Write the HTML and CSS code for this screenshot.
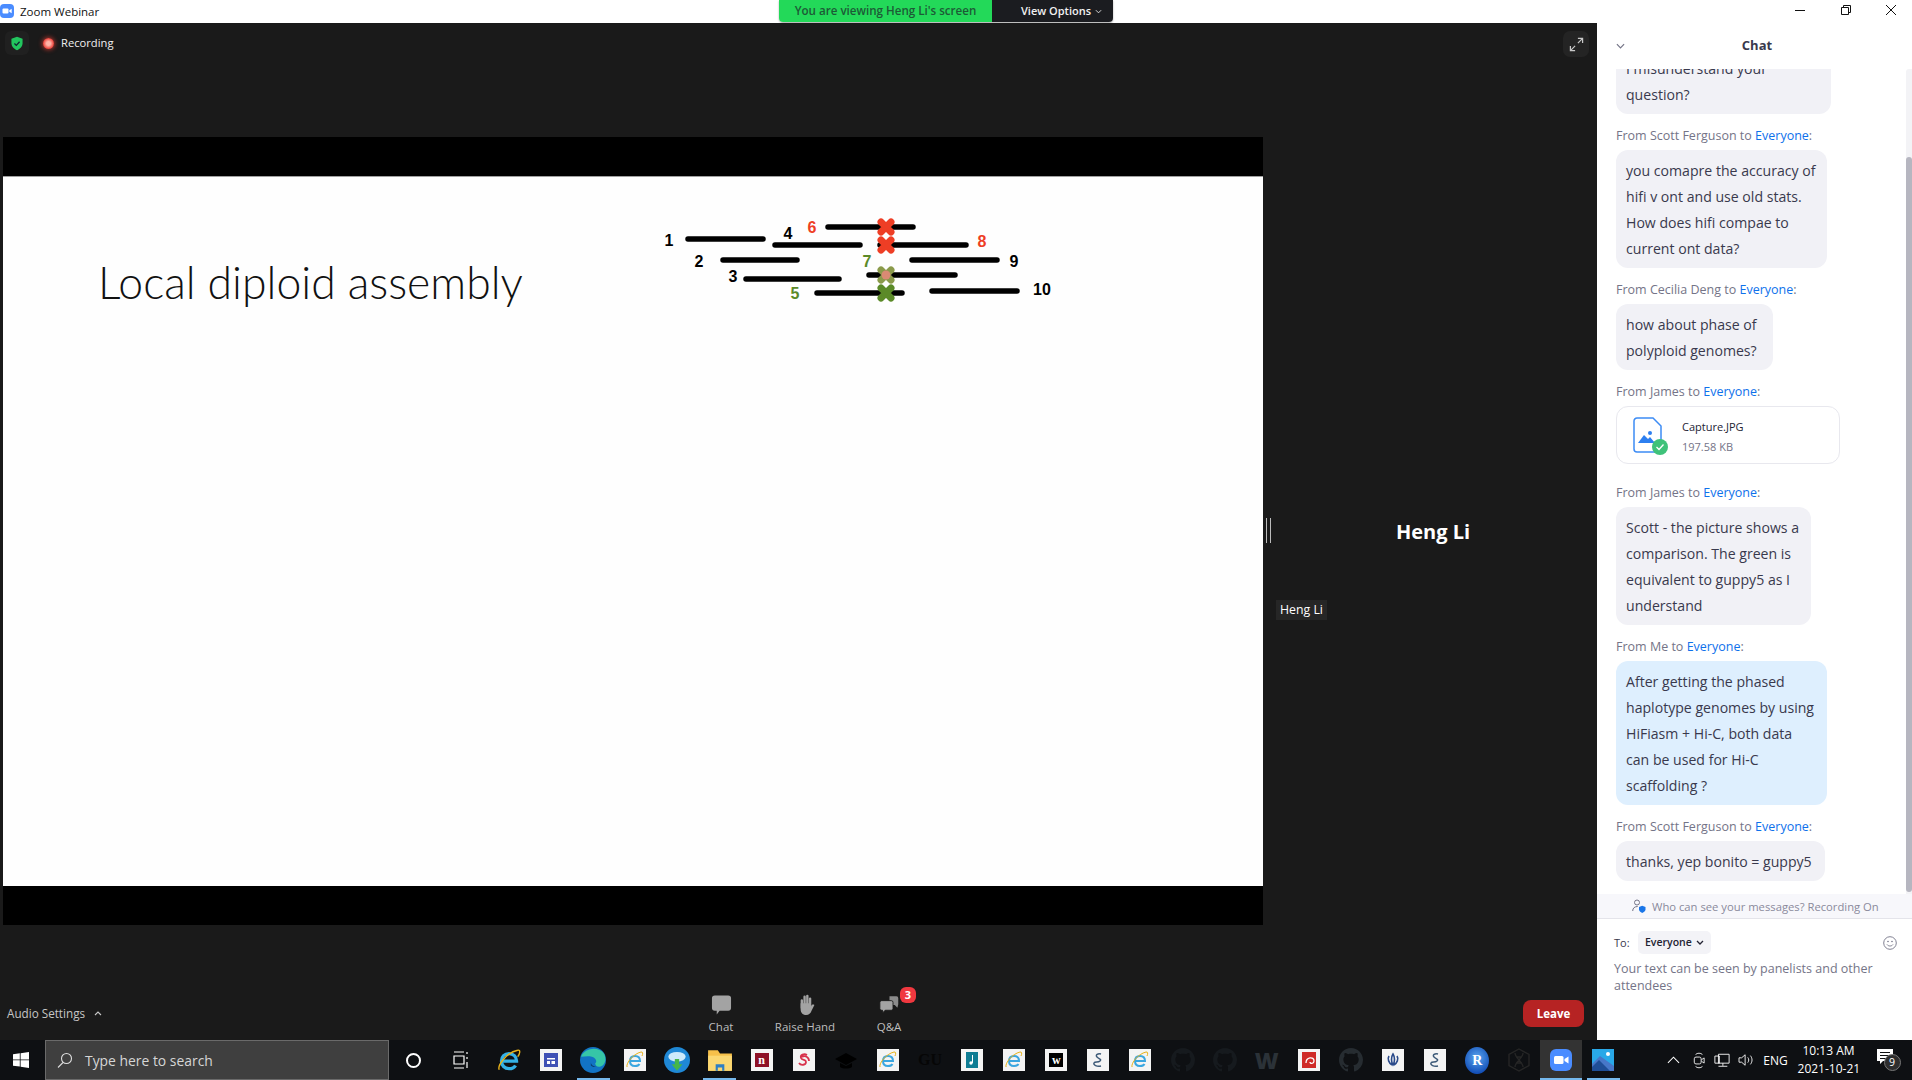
FILE: index.html
```html
<!DOCTYPE html>
<html lang="en">
<head>
<meta charset="utf-8">
<title>Zoom Webinar</title>
<link rel="stylesheet" href="styles.css">
</head>
<body>
<svg class="defs" aria-hidden="true">
  <symbol id="ie" viewBox="0 0 24 24">
    <path d="M6 13h13c0-4-3-7-7-7s-7 3-7 7 3 7 7 7c3 0 5-1 6-3" fill="none" stroke="#35b1e6" stroke-width="3"/>
    <path d="M3 21C1 17 10 5 20 3c3-1 2 4 0 6" fill="none" stroke="#e8b21a" stroke-width="1.3"/>
  </symbol>
  <symbol id="iet" viewBox="0 0 22 22">
    <rect width="22" height="22" fill="#f4f4f4"/>
    <path d="M6 12h10c0-3-2-5-5-5s-5 2-5 5 2 5 5 5c2 0 4-1 4.500-2" fill="none" stroke="#3aa6e0" stroke-width="2"/>
    <path d="M3 18C2 14 9 5 17 3c2-.5 2 2 1 4" fill="none" stroke="#e8b21a" stroke-width="1"/>
  </symbol>
  <symbol id="gh" viewBox="0 0 16 16">
    <path d="M8 0C3.580 0 0 3.580 0 8c0 3.540 2.290 6.530 5.470 7.590.4.070.55-.17.55-.38 0-.19-.01-.82-.01-1.490-2.010.37-2.530-.49-2.690-.94-.09-.23-.48-.94-.82-1.130-.28-.15-.68-.52-.01-.53.63-.01 1.080.58 1.230.82.72 1.210 1.870.87 2.330.66.07-.52.28-.87.51-1.070-1.780-.2-3.640-.89-3.640-3.950 0-.87.31-1.590.82-2.150-.08-.2-.36-1.020.08-2.120 0 0 .67-.21 2.200.82.64-.18 1.320-.27 2-.27.68 0 1.360.09 2 .27 1.530-1.040 2.200-.82 2.200-.82.44 1.100.16 1.920.08 2.120.51.56.82 1.270.82 2.150 0 3.070-1.870 3.750-3.650 3.950.29.25.54.73.54 1.480 0 1.070-.01 1.930-.01 2.200 0 .21.15.46.55.38A8.013 8.013 0 0016 8c0-4.420-3.580-8-8-8z" fill="currentColor"/>
  </symbol>
  <symbol id="squig" viewBox="0 0 22 22">
    <rect width="22" height="22" fill="#f4f4f4"/>
    <path d="M14 5c-3-1-6 1-4 3s5 2 3 4-5 0-6 2 3 4 7 3" fill="none" stroke="#3d5a78" stroke-width="1.500"/>
  </symbol>
</svg>

<div class="app">
  <header class="titlebar">
    <svg class="app-logo" viewBox="0 0 14 14"><rect width="14" height="14" rx="4" fill="#4a8cff"/><rect x="2.500" y="4.500" width="6" height="5" rx="1" fill="#fff"/><path d="M9.300 6.300l2.400-1.500v4.400L9.300 7.700z" fill="#fff"/></svg>
    <span class="app-name">Zoom Webinar</span>
    <div class="share-banner">
      <span class="share-status">You are viewing Heng Li's screen</span>
      <span class="share-options">View Options
        <svg class="mini-chev" viewBox="0 0 8 5"><path d="M1 1l3 3 3-3" fill="none" stroke="#ddd" stroke-width="1.100"/></svg>
      </span>
    </div>
    <div class="win-controls">
      <svg viewBox="0 0 12 12"><path d="M1 6.500h10" stroke="#111" stroke-width="1"/></svg>
      <svg viewBox="0 0 12 12"><path d="M1.500 3.500h7v7h-7z M3.500 3.500v-2h7v7h-2" fill="none" stroke="#111" stroke-width="1"/></svg>
      <svg viewBox="0 0 12 12"><path d="M1 1l10 10M11 1L1 11" stroke="#111" stroke-width="1"/></svg>
    </div>
  </header>

  <div class="main">
    <section class="stage">
      <div class="stage-top">
        <div class="tile-shield">
          <svg viewBox="0 0 14 16"><path d="M7 0l6.500 2.500v5c0 4-3 7-6.500 8.500C3.500 14.500.5 11.500.5 7.500v-5z" fill="#22c55e"/><path d="M4 8l2.200 2.200L10 6" fill="none" stroke="#123" stroke-width="1.500"/></svg>
        </div>
        <span class="rec-dot"></span>
        <span class="rec-label">Recording</span>
        <div class="tile-expand">
          <svg viewBox="0 0 16 16"><path d="M9.500 1.500h5v5M14.500 1.500L9.500 6.500M6.500 14.500h-5v-5M1.500 14.500l5-5" fill="none" stroke="#c8c8c8" stroke-width="1.300"/></svg>
        </div>
      </div>

      <div class="stage-mid">
        <div class="share">
          <div class="slide">
            <h1 class="slide-title">Local diploid assembly</h1>
            <svg class="diagram" viewBox="660 215 400 90">
              <g class="reads">
                <path d="M688 239h75M775 245h85M828 227h85M880 245h86M723 260h74M912 260h85M746 279h93M869 275h86M817 293h85M932 291h85"/>
              </g>
              <g class="cross red"><path d="M881 222l10 10M891 222l-10 10M881 240l10 10M891 240l-10 10"/></g>
              <g class="cross green-fade"><path d="M881 270l10 10M891 270l-10 10"/></g>
              <circle cx="886" cy="275" r="4.500" fill="#e8877a" opacity="0.85"/>
              <g class="cross green"><path d="M881 288l10 10M891 288l-10 10"/></g>
              <text x="669" y="246">1</text>
              <text x="788" y="239">4</text>
              <text class="t-red" x="812" y="233">6</text>
              <text class="t-red" x="982" y="247">8</text>
              <text x="699" y="267">2</text>
              <text x="1014" y="267">9</text>
              <text class="t-green" x="867" y="267">7</text>
              <text x="733" y="282">3</text>
              <text class="t-green" x="795" y="299">5</text>
              <text x="1042" y="295">10</text>
            </svg>
          </div>
        </div>
        <aside class="speaker">
          <span class="grip"></span>
          <div class="speaker-name">Heng Li</div>
          <div class="speaker-tag">Heng Li</div>
        </aside>
      </div>

      <div class="toolbar">
        <span class="audio">Audio Settings
          <svg class="audio-chev" viewBox="0 0 8 5"><path d="M1 4l3-3 3 3" fill="none" stroke="#c8c8c8" stroke-width="1.100"/></svg>
        </span>
        <div class="tools">
          <div class="tool tool-chat">
            <svg viewBox="0 0 22 22"><path d="M4 1h14a3 3 0 013 3v10a3 3 0 01-3 3H9l-3 4v-4H4a3 3 0 01-3-3V4a3 3 0 013-3z" fill="#a3a3a3"/></svg>
            <span>Chat</span>
          </div>
          <div class="tool tool-hand">
            <svg viewBox="0 0 22 24"><path d="M7 7v8M10 3v11M13 2v12M16 5v10" stroke="#a3a3a3" stroke-width="2.600" stroke-linecap="round"/><path d="M5.700 11v6c0 4 3 6 6 6s5-2 6-5l3-6c-1-1-3-.5-3.500 1l-1 2V10H5.700z" fill="#a3a3a3"/></svg>
            <span>Raise Hand</span>
          </div>
          <div class="tool tool-qa">
            <svg viewBox="0 0 24 22"><path d="M12 1h8a2 2 0 012 2v7l-1 4-3-3h-6z" fill="#8c8c8c"/><path d="M3 6h11a2 2 0 012 2v7a2 2 0 01-2 2H7l-3 3v-3H3a2 2 0 01-2-2V8a2 2 0 012-2z" fill="#a3a3a3" stroke="#1a1a1a"/></svg>
            <span>Q&amp;A</span>
            <b class="badge">3</b>
          </div>
        </div>
        <button class="leave">Leave</button>
      </div>
    </section>

    <aside class="chat">
      <div class="chat-head">
        <svg class="chat-collapse" viewBox="0 0 10 6"><path d="M1 1l4 4 4-4" fill="none" stroke="#747487" stroke-width="1.300"/></svg>
        <span>Chat</span>
      </div>
      <div class="chat-scroll">
        <div class="messages">
          <div class="bubble b1">I misunderstand your<br>question?</div>
          <div class="from">From Scott Ferguson to <a>Everyone</a>:</div>
          <div class="bubble b2">you comapre the accuracy of<br>hifi v ont and use old stats.<br>How does hifi compae to<br>current ont data?</div>
          <div class="from">From Cecilia Deng to <a>Everyone</a>:</div>
          <div class="bubble b3">how about phase of<br>polyploid genomes?</div>
          <div class="from">From James to <a>Everyone</a>:</div>
          <div class="file">
            <svg class="file-icon" viewBox="0 0 35 38">
              <path d="M4 1h16l8 8v24a2 2 0 01-2 2H4a3 3 0 01-3-3V4a3 3 0 013-3z" fill="#fff" stroke="#3d8cf5" stroke-width="1.500"/>
              <path d="M5 26l6-8 4 4 2-2 5 6z" fill="#2d7ff0"/><circle cx="17" cy="16" r="2" fill="#2d7ff0"/>
              <circle cx="27" cy="30" r="8" fill="#3fc27a"/><path d="M23.500 30l2.500 2.500 4.500-5" fill="none" stroke="#fff" stroke-width="1.300"/>
            </svg>
            <div class="file-meta">
              <div class="file-name">Capture.JPG</div>
              <div class="file-size">197.58 KB</div>
            </div>
          </div>
          <div class="from from-after-file">From James to <a>Everyone</a>:</div>
          <div class="bubble b5">Scott - the picture shows a<br>comparison. The green is<br>equivalent to guppy5 as I<br>understand</div>
          <div class="from">From Me to <a>Everyone</a>:</div>
          <div class="bubble mine b2">After getting the phased<br>haplotype genomes by using<br>HiFiasm + Hi-C, both data<br>can be used for Hi-C<br>scaffolding ?</div>
          <div class="from">From Scott Ferguson to <a>Everyone</a>:</div>
          <div class="bubble b7">thanks, yep bonito = guppy5</div>
        </div>
        <div class="scrollbar"><div class="thumb"></div></div>
      </div>
      <div class="notice">
        <svg viewBox="0 0 14 14"><circle cx="5" cy="3.500" r="2.500" fill="none" stroke="#747487"/><path d="M.7 12c0-3 2-4.500 5-4.500" fill="none" stroke="#747487"/><path d="M7 8l3.200-1.300L13.500 8v2.500c0 1.500-1.500 2.800-3.300 3.500C8.500 13.300 7 12 7 10.500z" fill="#1a76e8"/></svg>
        <span>Who can see your messages? Recording On</span>
      </div>
      <div class="compose">
        <div class="to-row">
          <span class="to-label">To:</span>
          <span class="to-select">Everyone
            <svg viewBox="0 0 8 5"><path d="M1 1l3 3 3-3" fill="none" stroke="#232333" stroke-width="1.300"/></svg>
          </span>
          <svg class="emoji" viewBox="0 0 14 14"><circle cx="7" cy="7" r="6.300" fill="none" stroke="#747487" stroke-width="0.900"/><circle cx="5" cy="5.500" r=".8" fill="#747487"/><circle cx="9" cy="5.500" r=".8" fill="#747487"/><path d="M4 8.500c1.500 2 4.500 2 6 0" fill="none" stroke="#747487" stroke-width="0.900"/></svg>
        </div>
        <div class="placeholder">Your text can be seen by panelists and other attendees</div>
      </div>
    </aside>
  </div>

  <footer class="taskbar">
    <div class="start">
      <svg viewBox="0 0 16 16"><path d="M0 2.300l6.800-1v6.200H0zM7.600 1.200L16 0v7.500H7.600zM0 8.300h6.800v6.300L0 13.700zM7.600 8.300H16V16l-8.400-1.200z" fill="#fff"/></svg>
    </div>
    <div class="search">
      <svg viewBox="0 0 16 16"><circle cx="9.500" cy="6.500" r="5" fill="none" stroke="#ddd" stroke-width="1.100"/><path d="M6 10.500L1 15.500" stroke="#ddd" stroke-width="1.100"/></svg>
      <span>Type here to search</span>
    </div>
    <div class="sys-btn cortana"><i></i></div>
    <div class="sys-btn">
      <svg class="taskview" viewBox="0 0 16 18"><path d="M1 1h10M1 17h10M1 5h10v8H1zM14 1v2M14 6v2M14 11v6" fill="none" stroke="#fff" stroke-width="1.200"/></svg>
    </div>
    <div class="apps">
      <div class="app-slot"><svg class="ic26" viewBox="0 0 24 24"><use href="#ie"/></svg></div>
      <div class="app-slot"><svg class="ic22" viewBox="0 0 22 22"><rect width="22" height="22" fill="#f4f4f4"/><rect x="4" y="4" width="14" height="14" fill="#3f51b5"/><path d="M7 9h8v1.500H7zM7 12h3v3H7zM11.500 12H15v3h-3.500z" fill="#fff"/></svg></div>
      <div class="app-slot on"><svg class="ic26" viewBox="0 0 24 24"><circle cx="12" cy="12" r="12" fill="#1273c4"/><path d="M1 9C4 1 17-1 22 6c3 5 1 11-3 12-3 1-5-1-5-3 2-1 1-5-3-6-4-1-7 0-10 0z" fill="#36c6a7"/><path d="M10 14c0 2 2 4 5 4-2 1-4 0-5-1z" fill="#0b3f70"/></svg></div>
      <div class="app-slot"><svg class="ic22" viewBox="0 0 22 22"><use href="#iet"/></svg></div>
      <div class="app-slot"><svg class="ic26" viewBox="0 0 24 24"><circle cx="12" cy="12" r="12" fill="#1f88d6"/><ellipse cx="12" cy="9" rx="8" ry="4.500" fill="#cdeafb"/><path d="M10 11h4v5h3l-5 6-5-6h3z" fill="#45b649"/></svg></div>
      <div class="app-slot on"><svg class="ic26" viewBox="0 0 24 24"><path d="M1 3h9l2 3h11v16H1z" fill="#f6c04a"/><path d="M1 8h22v14H1z" fill="#fbd872"/><path d="M8 16h8v6h-2v-3h-4v3H8z" fill="#2f7fc4"/></svg></div>
      <div class="app-slot"><svg class="ic22" viewBox="0 0 22 22"><rect width="22" height="22" fill="#f4f4f4"/><rect x="4" y="4" width="14" height="14" fill="#8e1126"/></svg><em class="glyph g-n">n</em></div>
      <div class="app-slot"><svg class="ic22" viewBox="0 0 22 22"><rect width="22" height="22" fill="#f4f4f4"/><path d="M14 6c-3-2-7 0-6 3s5 1 5 4-5 4-7 1M9 8c3-2 7 0 7 4" fill="none" stroke="#d8324c" stroke-width="1.800"/></svg></div>
      <div class="app-slot"><svg class="ic22" viewBox="0 0 22 22"><path d="M11 4L0 10l11 6 11-6zM5 14v4c3 2 9 2 12 0v-4l-6 3z" fill="#000"/></svg></div>
      <div class="app-slot"><svg class="ic22" viewBox="0 0 22 22"><use href="#iet"/></svg></div>
      <div class="app-slot"><span class="glyph-gu">GU</span></div>
      <div class="app-slot"><svg class="ic22" viewBox="0 0 22 22"><rect width="22" height="22" fill="#f4f4f4"/><rect x="5" y="3" width="12" height="16" fill="#0e7c93"/><path d="M11.500 6v8" stroke="#fff"/><circle cx="10" cy="14" r="1.700" fill="#fff"/></svg></div>
      <div class="app-slot"><svg class="ic22" viewBox="0 0 22 22"><use href="#iet"/></svg></div>
      <div class="app-slot"><svg class="ic22" viewBox="0 0 22 22"><rect width="22" height="22" fill="#f4f4f4"/><rect x="4" y="4" width="14" height="14" fill="#000"/></svg><em class="glyph g-w">w</em></div>
      <div class="app-slot"><svg class="ic22" viewBox="0 0 22 22"><use href="#squig"/></svg></div>
      <div class="app-slot"><svg class="ic22" viewBox="0 0 22 22"><use href="#iet"/></svg></div>
      <div class="app-slot"><svg class="ic24 gh-dim" viewBox="0 0 16 16"><use href="#gh"/></svg></div>
      <div class="app-slot"><svg class="ic24 gh-dim" viewBox="0 0 16 16"><use href="#gh"/></svg></div>
      <div class="app-slot"><span class="glyph-bigw">W</span></div>
      <div class="app-slot"><svg class="ic22" viewBox="0 0 22 22"><rect width="22" height="22" fill="#f4f4f4"/><rect x="4" y="3" width="14" height="16" fill="#cf2a27"/><path d="M8 14c0-6 8-7 8-2 0 3-4 3-4 1" fill="none" stroke="#fff" stroke-width="1.300"/></svg></div>
      <div class="app-slot"><svg class="ic24 gh-mid" viewBox="0 0 16 16"><use href="#gh"/></svg></div>
      <div class="app-slot"><svg class="ic22" viewBox="0 0 22 22"><rect width="22" height="22" fill="#f4f4f4"/><path d="M11 5c-2 3-2 8 0 11 2-3 2-8 0-11zM7 7c-2 3 0 7 3 9M15 7c2 3 0 7-3 9" fill="none" stroke="#2a4a8a" stroke-width="1.600"/></svg></div>
      <div class="app-slot"><svg class="ic22" viewBox="0 0 22 22"><use href="#squig"/></svg></div>
      <div class="app-slot"><div class="r-logo">R</div></div>
      <div class="app-slot"><svg class="ic24" viewBox="0 0 24 24"><path d="M12 1l10 5.500v11L12 23 2 17.500v-11z" fill="none" stroke="#262626" stroke-width="1.400"/><path d="M8 5c0 5 8 9 8 14M16 5c0 5-8 9-8 14M9 9h6M9 15h6" fill="none" stroke="#262626" stroke-width="1.300"/></svg></div>
      <div class="app-slot zoom-slot on"><svg class="ic22z" viewBox="0 0 22 22"><rect width="22" height="22" rx="6" fill="#4a8cff"/><rect x="4" y="7" width="9.500" height="8" rx="1.500" fill="#fff"/><path d="M14.500 10l4-2.500v7l-4-2.500z" fill="#fff"/></svg></div>
      <div class="app-slot on"><svg class="ic22" viewBox="0 0 22 22"><rect width="22" height="22" fill="#29a8e8"/><circle cx="16" cy="5" r="2" fill="#fff"/><path d="M0 15l8-8 14 10v5H0z" fill="#4777c8"/><path d="M0 18l7-7 11 11H0z" fill="#1f4e96"/></svg></div>
    </div>
    <div class="tray">
      <svg class="t-up" viewBox="0 0 14 8"><path d="M1 7l6-6 6 6" fill="none" stroke="#fff" stroke-width="1.100"/></svg>
      <svg class="t-cam" viewBox="0 0 14 20"><path d="M3 3c2-2 6-2 8 0M3 17c2 2 6 2 8 0" fill="none" stroke="#fff"/><rect x="1.500" y="6" width="8" height="8" rx="2" fill="none" stroke="#fff"/><path d="M10 9l3-2v6l-3-2" fill="none" stroke="#fff"/></svg>
      <svg class="t-net" viewBox="0 0 18 16"><path d="M5 1h12v10H5zM1 3h5v8H1zM10 11v3M5 14.500h10" fill="#0e1013" stroke="#fff"/></svg>
      <svg class="t-vol" viewBox="0 0 18 16"><path d="M1 5.500h3L8 2v12L4 10.500H1z M11 5c1.500 2 1.500 4 0 6M14 3c2.500 3 2.500 7 0 10" fill="none" stroke="#fff"/></svg>
      <span class="t-lang">ENG</span>
      <div class="t-clock"><div>10:13 AM</div><div>2021-10-21</div></div>
      <div class="t-note">
        <svg viewBox="0 0 16 16"><path d="M0 0h16v12H6l-3 3v-3H0z" fill="#fff"/><path d="M3 3.500h10M3 6.500h10M3 9.500h7" stroke="#0e1013"/></svg>
        <b>9</b>
      </div>
    </div>
  </footer>
</div>
</body>
</html>
```

FILE: styles.css
```css
* { box-sizing: border-box; }
html, body { margin: 0; height: 100%; overflow: hidden; }
body { font-family: "Open Sans", "Noto Sans", sans-serif; background: #1a1a1a; color: #232333; }
.defs { position: absolute; width: 0; height: 0; }

.app { display: flex; flex-direction: column; width: 1912px; height: 1080px; }

/* title bar */
.titlebar { height: 23px; flex: none; background: #fff; display: flex; align-items: flex-start; }
.app-logo { width: 14px; height: 14px; margin-top: 4px; flex: none; }
.app-name { margin-left: 6px; font-size: 11.500px; line-height: 24px; color: #111; width: 759px; flex: none; }
.share-banner { display: flex; height: 22px; width: 334px; flex: none; border-radius: 0 0 4px 4px; overflow: hidden; box-shadow: 0 1px 2px rgba(0,0,0,.35); font-size: 11px; font-weight: 600; line-height: 21px; }
.share-status { width: 213px; background: #23d959; color: #1d5a36; text-align: center; font-size: 11.600px; }
.share-options { flex: 1; background: #1b1c20; color: #f2f2f2; padding-left: 29px; white-space: nowrap; }
.mini-chev { width: 7px; height: 5px; margin-left: 1px; vertical-align: 1px; }
.win-controls { margin-left: auto; display: flex; gap: 33.500px; padding: 4px 15px 0 0; }
.win-controls svg { width: 12px; height: 12px; }

/* main */
.main { flex: 1; display: flex; min-height: 0; }
.stage { width: 1597px; flex: none; display: flex; flex-direction: column; background: #1a1a1a; }
.stage-top { height: 114px; flex: none; display: flex; align-items: flex-start; padding: 8px 8px 0 5px; }
.tile-shield { width: 24px; height: 24px; background: #202020; border-radius: 6px; display: flex; align-items: center; justify-content: center; }
.tile-shield svg { width: 12px; height: 15px; }
.rec-dot { width: 11px; height: 11px; margin: 7px 0 0 14px; border-radius: 50%; background: radial-gradient(circle, #ffb4a8 0 25%, #ee4a42 65%); box-shadow: 0 0 4px 1px rgba(230,60,50,.7); }
.rec-label { margin: 3px 0 0 7px; color: #f0f0f0; font-size: 11.200px; line-height: 18px; }
.tile-expand { margin-left: auto; width: 26px; height: 26px; background: #242424; border-radius: 7px; display: flex; align-items: center; justify-content: center; }
.tile-expand svg { width: 15px; height: 15px; }

.stage-mid { height: 788px; flex: none; display: flex; }
.share { width: 1260px; margin-left: 3px; flex: none; background: #000; padding: 39px 0; }
.slide { position: relative; height: 710px; background: #fefefe; border-top: 1px solid #a0a0a0; padding: 78px 0 0 95px; }
.slide-title { margin: 0; font-family: "Lato", sans-serif; font-weight: 300; font-size: 44.500px; line-height: 54px; color: #111; white-space: nowrap; }
.diagram { position: absolute; left: 657px; top: 38px; width: 400px; height: 90px; font-family: "Liberation Sans", sans-serif; font-weight: 700; font-size: 16px; text-anchor: middle; fill: #000; }
.reads path { stroke: #000; stroke-width: 5.500; stroke-linecap: round; fill: none; }
.cross path { fill: none; stroke-width: 7; stroke-linecap: round; }
.cross.red path { stroke: #ee3e25; }
.cross.green path { stroke: #5b8a28; }
.cross.green-fade path { stroke: #8a9a4a; }
.t-red { fill: #ee3e25; }
.t-green { fill: #5b8a28; }

.speaker { flex: 1; position: relative; display: block; }
.grip { position: absolute; left: 3px; top: 381px; width: 5px; height: 25px; border-left: 1px solid #bbb; border-right: 1px solid #bbb; }
.speaker-name { padding: 381px 0 0 6px; text-align: center; color: #fff; font-weight: 700; font-size: 20px; line-height: 27px; }
.speaker-tag { margin: 55px 0 0 13px; width: 51px; height: 20px; background: #262626; color: #fff; font-size: 12.300px; line-height: 20px; text-align: center; white-space: nowrap; }

.toolbar { flex: 1; display: flex; align-items: flex-start; padding-right: 13px; }
.audio { margin: 78px 0 0 7px; width: 100px; font-size: 11.700px; line-height: 20px; color: #c6c6c6; white-space: nowrap; flex: none; }
.audio-chev { width: 8px; height: 5px; margin-left: 6px; vertical-align: 2px; }
.tools { display: flex; margin: 69px 0 0 572px; }
.tool { position: relative; width: 84px; flex: none; display: flex; flex-direction: column; align-items: center; color: #bdbdbd; font-size: 11.500px; line-height: 16px; }
.tool svg { width: 21px; height: 22px; margin-bottom: 3px; }
.tool-hand { width: 84px; }
.badge { position: absolute; left: 53px; top: -7px; width: 16px; height: 16px; border-radius: 6px; background: #f0383f; color: #fff; font-size: 11px; line-height: 16px; font-weight: 700; text-align: center; }
.leave { margin: 75px 0 0 auto; width: 61px; height: 27px; border: 0; border-radius: 8px; background: #b62323; color: #fff; font: 700 11.500px "Open Sans", sans-serif; padding: 0; }

/* chat */
.chat { flex: 1; background: #fff; display: flex; flex-direction: column; min-width: 0; }
.chat-head { height: 46px; flex: none; position: relative; text-align: center; font-weight: 700; font-size: 13px; line-height: 44.500px; color: #39394d; padding-left: 5px; }
.chat-collapse { position: absolute; left: 19px; top: 20px; width: 9px; height: 6px; }
.chat-scroll { height: 825px; flex: none; display: flex; }
.messages { flex: 1; min-width: 0; overflow: hidden; display: flex; flex-direction: column; justify-content: flex-end; align-items: flex-start; padding: 0 0 13px 19px; }
.bubble { flex: none; padding: 7.500px 10px 6.500px; border-radius: 12px; background: #f1f1f6; color: #39394d; font-size: 14.100px; line-height: 26px; white-space: nowrap; }
.bubble.mine { background: #deeffe; }
.b1 { width: 215px; }
.b2 { width: 211px; }
.b3 { width: 157px; }
.b5 { width: 195px; }
.b7 { width: 209px; }
.from { flex: none; height: 36px; padding-top: 14px; font-size: 12.500px; line-height: 16px; color: #747487; white-space: nowrap; }
.from a { color: #0e71eb; }
.from-after-file { height: 43px; padding-top: 21px; }
.file { flex: none; width: 224px; height: 58px; border: 1.500px solid #e8e8ee; border-radius: 12px; display: flex; align-items: center; padding-left: 16px; }
.file-icon { width: 35px; height: 38px; flex: none; margin-top: 2px; }
.file-meta { margin: 4px 0 0 14px; }
.file-name { font-size: 11px; line-height: 20px; color: #232333; }
.file-size { font-size: 11px; line-height: 20px; color: #747487; }
.scrollbar { width: 6.500px; flex: none; background: #f3f3f6; border-radius: 3px 0 0 0; }
.thumb { margin-top: 88px; height: 735px; background: #b6b6c0; border-radius: 3px; }

.notice { height: 25px; flex: none; background: #f7f7fb; border-bottom: 1px solid #e4e4ea; display: flex; align-items: center; padding-left: 35px; font-size: 11.250px; color: #8a8a9c; white-space: nowrap; }
.notice svg { width: 14px; height: 14px; margin-right: 6px; flex: none; }
.compose { flex: 1; padding: 12px 0 0 17px; }
.to-row { display: flex; align-items: center; height: 23px; padding-right: 15px; }
.to-label { font-size: 11px; color: #39394d; width: 24px; }
.to-select { width: 73px; height: 23px; background: #f3f3f7; border-radius: 5px; font-size: 10.500px; font-weight: 600; line-height: 23px; padding-left: 7px; color: #232333; white-space: nowrap; }
.to-select svg { width: 8px; height: 5px; margin-left: 1px; vertical-align: 1px; }
.emoji { width: 14px; height: 14px; margin-left: auto; }
.placeholder { margin-top: 6px; width: 285px; font-size: 12.500px; line-height: 17px; color: #747487; }

/* taskbar */
.taskbar { height: 40px; flex: none; background: #0e1013; display: flex; align-items: stretch; }
.start { width: 45px; flex: none; display: flex; align-items: center; padding-left: 13px; }
.start svg { width: 16px; height: 16px; }
.search { width: 344px; flex: none; background: #3f3f3f; border: 1px solid #6a6a6a; border-bottom-width: 1px; display: flex; align-items: center; color: #d6d6d6; font-size: 13.900px; padding-left: 11px; }
.search svg { width: 16px; height: 16px; margin-right: 12px; }
.sys-btn { width: 48px; flex: none; display: flex; align-items: center; justify-content: center; }
.cortana i { display: block; width: 15px; height: 15px; border: 2px solid #fff; border-radius: 50%; }
.taskview { width: 16px; height: 18px; }
.apps { display: flex; flex: none; margin-left: 3px; }
.app-slot { position: relative; width: 42.100px; flex: none; display: flex; align-items: center; justify-content: center; }
.app-slot.on::after { content: ""; position: absolute; left: 4.500px; right: 4.500px; bottom: 0; height: 2px; background: #76b9ed; }
.zoom-slot { background: #333; }
.zoom-slot.on::after { left: 0; right: 0; }
.ic26 { width: 26px; height: 26px; }
.ic24 { width: 24px; height: 24px; }
.ic22 { width: 22px; height: 22px; }
.ic22z { width: 22px; height: 22px; }
.gh-dim { color: #161a1e; }
.gh-mid { color: #262c31; }
.glyph { position: absolute; font-family: "Liberation Serif", serif; font-style: normal; font-weight: 700; color: #fff; font-size: 12px; line-height: 14px; }
.glyph-gu { font-family: "Liberation Serif", serif; font-weight: 700; font-size: 16px; color: #060606; }
.glyph-bigw { font-family: "Open Sans", sans-serif; font-weight: 800; font-size: 23px; line-height: 26px; color: #2b3238; }
.r-logo { width: 24px; height: 27px; border-radius: 50%; background: radial-gradient(circle at 50% 40%, #5aa7f0, #1450b8 75%); color: #fff; font: 700 14px/27px "Liberation Serif", serif; text-align: center; }
.tray { flex: 1; display: flex; align-items: center; color: #fff; position: relative; }
.t-up { width: 13px; height: 8px; margin-left: 42px; }
.t-cam { width: 12px; height: 19px; margin-left: 13px; }
.t-net { width: 16px; height: 15px; margin-left: 9px; }
.t-vol { width: 16px; height: 14px; margin-left: 8px; }
.t-lang { font-size: 12px; margin-left: 7px; width: 30px; text-align: center; }
.t-clock { margin-left: 7px; width: 62px; text-align: center; font-size: 12px; line-height: 18px; white-space: nowrap; }
.t-note { position: relative; margin-left: 17px; width: 26px; height: 24px; }
.t-note svg { width: 16px; height: 16px; }
.t-note b { position: absolute; left: 7px; top: 6px; width: 17px; height: 17px; border-radius: 50%; background: #2e2e2e; border: 1px solid #777; color: #fff; font-size: 10.500px; font-weight: 400; line-height: 15px; text-align: center; }
```
